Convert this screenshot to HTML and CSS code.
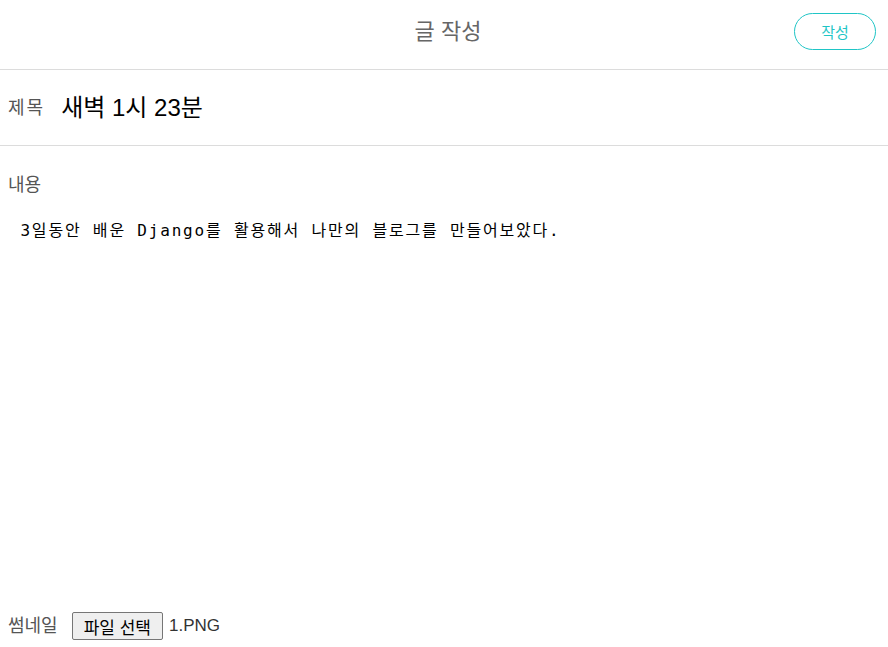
FILE: index.html
```html
<!DOCTYPE html>
<html lang="ko">
<head>
  <meta charset="UTF-8">
  <meta name="viewport" content="width=device-width, initial-scale=1.0">
  <title>글 작성</title>
  <link rel="stylesheet" href="styles.css">
</head>
<body>
  <form class="write-form">
    <header class="top-bar">
      <h1 class="page-title">글 작성</h1>
      <button type="submit" class="submit-btn">작성</button>
    </header>

    <div class="title-row">
      <label class="field-label" for="title">제목</label>
      <input id="title" class="title-input" type="text" value="새벽 1시 23분">
    </div>

    <div class="content-block">
      <label class="field-label" for="content">내용</label>
      <textarea id="content" class="content-input"> 3일동안 배운 Django를 활용해서 나만의 블로그를 만들어보았다.</textarea>
    </div>

    <div class="thumb-row">
      <span class="field-label">썸네일</span>
      <span class="file-picker">
        <button type="button" class="file-btn">파일 선택</button>
        <span class="file-name">1.PNG</span>
      </span>
    </div>
  </form>
</body>
</html>
```

FILE: styles.css
```css
* {
  margin: 0;
  padding: 0;
  box-sizing: border-box;
}

body {
  font-family: "Liberation Sans", "Noto Sans CJK KR", Arial, sans-serif;
  background-color: white;
  color: #333;
}

.write-form {
  display: flex;
  flex-direction: column;
  height: 647px;
}

.top-bar {
  position: relative;
  height: 70px;
  border-bottom: 1px solid #dcdcdc;
  display: flex;
  justify-content: center;
  padding-top: 17px;
  padding-left: 8px;
}

.page-title {
  font-size: 22px;
  font-weight: normal;
  line-height: 30px;
  color: #666;
}

.submit-btn {
  position: absolute;
  top: 13px;
  right: 12px;
  width: 82px;
  height: 37px;
  background-color: white;
  border: 1px solid #1fc5c6;
  border-radius: 19px;
  color: #1fc5c6;
  font-family: inherit;
  font-size: 15px;
  cursor: pointer;
}

.field-label {
  font-size: 18px;
  line-height: 24px;
  color: #555;
}

.title-row {
  height: 76px;
  border-bottom: 1px solid #dcdcdc;
  display: flex;
  align-items: center;
  gap: 16px;
  padding: 0 8px;
}

.title-row .field-label {
  letter-spacing: 2px;
}

.title-input {
  flex: 1;
  border: none;
  outline: none;
  font-family: inherit;
  font-size: 24px;
  color: black;
  line-height: 30px;
}

.content-block {
  display: flex;
  flex-direction: column;
  padding: 27px 8px 0;
  flex: 1;
}

.content-input {
  margin-top: 24px;
  height: 380px;
  border: none;
  outline: none;
  resize: none;
  padding: 0 1px;
  font-family: "DejaVu Sans Mono", "Noto Sans CJK KR", monospace;
  font-size: 16px;
  letter-spacing: 1.8px;
  line-height: 20px;
  color: black;
}

.thumb-row {
  display: flex;
  align-items: center;
  gap: 14px;
  padding: 0 8px 7px;
}

.file-picker {
  display: flex;
  align-items: center;
  gap: 6px;
}

.file-btn {
  height: 28px;
  padding: 0 11px;
  background-color: #efefef;
  border: 1px solid #767676;
  border-radius: 2px;
  font-family: inherit;
  font-size: 17px;
  color: black;
}

.file-name {
  font-size: 17px;
  color: #333;
}
```
